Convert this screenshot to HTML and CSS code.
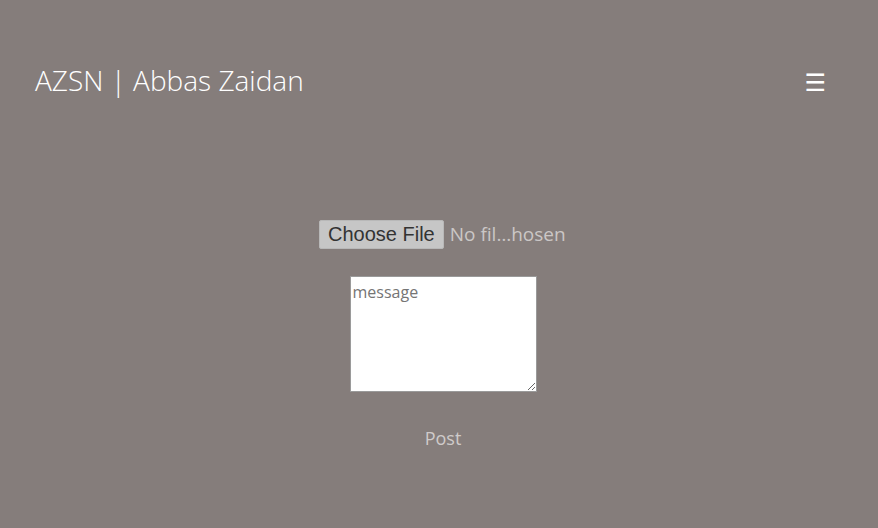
FILE: index.html
```html
<!DOCTYPE html>
<html>
<head>
<meta charset="utf-8">
<link rel="stylesheet" href="styles.css">
</head>
<body>
<header class="topbar">
  <div class="brand">AZSN | Abbas Zaidan</div>
  <div class="menu">☰</div>
</header>
<main class="content">
  <form class="post-form">
    <input class="file" type="file">
    <textarea class="msg" placeholder="message"></textarea>
    <button class="post" type="button">Post</button>
  </form>
</main>
</body>
</html>
```
FILE: styles.css
```css
html, body {
  margin: 0;
  padding: 0;
  height: 100%;
}
body {
  background: #857d7b;
  font-family: "Open Sans", sans-serif;
  color: #fff;
}
.topbar {
  display: flex;
  justify-content: space-between;
  align-items: flex-start;
  padding: 58px 52px 0 35px;
}
.brand {
  font-size: 28px;
  font-weight: 300;
  line-height: 44px;
}
.menu {
  font-family: "DejaVu Sans", sans-serif;
  font-size: 24px;
  line-height: 44px;
  padding-top: 3px;
}
.content {
  display: flex;
  justify-content: center;
  padding-top: 115px;
  padding-left: 8px;
}
.post-form {
  display: flex;
  flex-direction: column;
  align-items: center;
}
.file {
  font-family: "Open Sans", sans-serif;
  font-size: 19px;
  color: #cbc7c6;
  width: 248px;
}
.file::file-selector-button {
  font-family: "Liberation Sans", sans-serif;
  font-size: 20px;
  color: #333;
  background: #c6c6c6;
  border: 1px solid #b8b8b8;
  border-radius: 2px;
  padding: 2px 8px;
  margin-right: 6px;
}
.msg {
  margin-top: 27px;
  width: 187px;
  height: 116px;
  box-sizing: border-box;
  border: 1px solid #9a9a9a;
  border-radius: 0;
  padding: 4px 2px;
  font-family: "Open Sans", sans-serif;
  font-size: 16px;
  resize: both;
}
.msg::placeholder {
  color: #757575;
}
.post {
  margin-top: 34px;
  background: none;
  border: none;
  font-family: "Open Sans", sans-serif;
  font-size: 18px;
  color: #cfcbca;
  padding: 0;
  cursor: pointer;
}
```
